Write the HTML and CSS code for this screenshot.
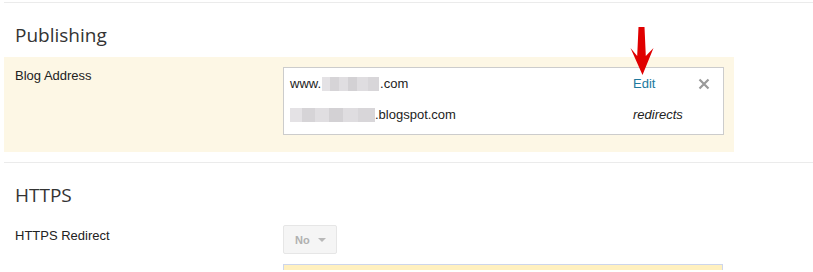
FILE: index.html
```html
<!DOCTYPE html>
<html lang="en">
<head>
    <link rel="stylesheet" href="styles.css">
</head>
<body>
    <div class="settings">
        <section class="section">
            <h2>Publishing</h2>
            <div class="row row-highlight">
                <div class="label">Blog Address</div>
                <div class="field">
                    <div class="address-box">
                        <div class="address-line">
                            <span class="url">www.<span class="blur blur-short"></span>.com</span>
                            <span class="action">
                                <a class="edit-link" href="#">Edit</a>
                                <svg class="arrow" width="24" height="48" viewBox="0 0 24 48">
                                    <path d="M8.5 0 L14.5 0 L15.8 29 L23.5 21 L12.5 48 L0.5 21 L7.2 29 Z" fill="#e00000"/>
                                </svg>
                            </span>
                            <span class="remove">
                                <svg width="12" height="12" viewBox="0 0 12 12">
                                    <path d="M1.5 1.5 L10.5 10.5 M10.5 1.5 L1.5 10.5" stroke="#9a9a9a" stroke-width="2.2"/>
                                </svg>
                            </span>
                        </div>
                        <div class="address-line">
                            <span class="url"><span class="blur blur-long"></span>.blogspot.com</span>
                            <span class="action redirects">redirects</span>
                            <span class="remove"></span>
                        </div>
                    </div>
                </div>
            </div>
        </section>

        <section class="section">
            <h2>HTTPS</h2>
            <div class="row">
                <div class="label">HTTPS Redirect</div>
                <div class="field">
                    <div class="select-btn">No <span class="caret"></span></div>
                    <div class="notice"></div>
                </div>
            </div>
        </section>
    </div>
</body>
</html>
```

FILE: styles.css
```css
body {
    margin: 0;
    font-family: "Liberation Sans", Arial, sans-serif;
    font-size: 13px;
    color: #222;
    background: #fff;
    overflow: hidden;
}

.settings {
    padding: 2px 0 0 4px;
}

.section {
    border-top: 1px solid #ebebeb;
}

.section h2 {
    margin: 0;
    padding: 19px 0 0 11px;
    height: 35px;
    font-family: "Open Sans", sans-serif;
    font-weight: 400;
    font-size: 19px;
    color: #333;
}

.row {
    display: flex;
    padding: 10px 0 0 11px;
}

.row-highlight {
    background: #fdf7e5;
    width: 719px;
    height: 85px;
    margin-bottom: 10px;
}

.label {
    width: 268px;
    padding-top: 1px;
}

.field {
    width: 441px;
}

.address-box {
    background: #fff;
    border: 1px solid #ccc;
    height: 66px;
    padding: 0 0 0 6px;
}

.address-line {
    display: flex;
    align-items: center;
    height: 31px;
}

.url {
    flex: 1;
    display: flex;
    align-items: center;
}

.blur {
    display: inline-block;
    height: 14px;
    background: linear-gradient(90deg, #e4e2e5 0 14%, #d6d4d7 14% 30%, #e0dee1 30% 46%, #d3d1d4 46% 62%, #dfdde0 62% 80%, #d8d6d9 80% 100%);
}

.blur-short {
    width: 57px;
    margin: 0 1px;
}

.blur-long {
    width: 85px;
}

.action {
    width: 65px;
    position: relative;
}

.edit-link {
    color: #21799e;
    text-decoration: none;
}

.arrow {
    position: absolute;
    left: -3px;
    top: -49px;
}

.redirects {
    font-style: italic;
}

.remove {
    width: 25px;
    display: flex;
    align-items: center;
}

.select-btn {
    margin-top: -2px;
    width: 54px;
    height: 29px;
    box-sizing: border-box;
    border: 1px solid #e6e6e6;
    border-radius: 2px;
    background: #f5f5f5;
    color: #b0b0b0;
    font-weight: bold;
    font-size: 11px;
    display: flex;
    align-items: center;
    padding-left: 11px;
    gap: 8px;
}

.caret {
    width: 0;
    height: 0;
    border-left: 4px solid transparent;
    border-right: 4px solid transparent;
    border-top: 4px solid #b8b8b8;
}

.notice {
    margin-top: 10px;
    height: 5px;
    width: 438px;
    background: #fff0bf;
    border: 1px solid #cdd6ec;
    border-bottom: none;
}
```
